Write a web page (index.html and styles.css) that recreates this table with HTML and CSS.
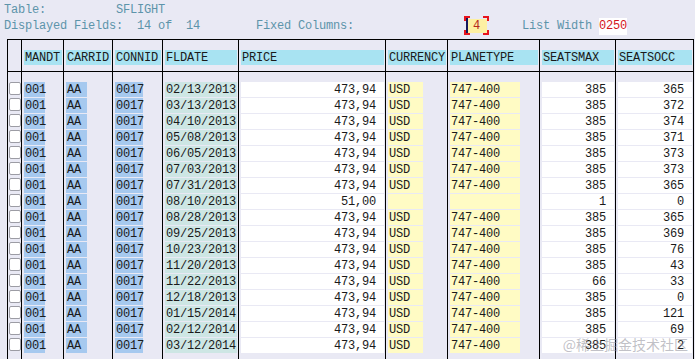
FILE: index.html
```html
<!doctype html>
<html lang="en">
<head>
	<meta charset="UTF-8">
	<title>SFLIGHT</title>
	<link rel="stylesheet" href="styles.css">
</head>
<body>
	<div class="info">
		<div class="line"><span class="lbl">Table:          SFLIGHT</span></div>
		<div class="line">
			<span class="lbl">Displayed Fields:  14 of  14        Fixed Columns:</span>
			<span class="field">4<svg class="brk" width="25" height="19" viewBox="0 0 25 19"><path d="M1 5V1H6M19 1H24V5M1 14V18H6M19 18H24V14" fill="none" stroke="#e8141c" stroke-width="2"/></svg></span>
			<span class="lbl list-w">List Width</span>
			<span class="width">0250</span>
		</div>
	</div>

	<div class="list">
		<div class="row head">
			<div class="cell"></div>
			<div class="cell"><span class="h">MANDT</span></div>
			<div class="cell"><span class="h">CARRID</span></div>
			<div class="cell"><span class="h">CONNID</span></div>
			<div class="cell"><span class="h">FLDATE</span></div>
			<div class="cell"><span class="h">PRICE</span></div>
			<div class="cell"><span class="h">CURRENCY</span></div>
			<div class="cell"><span class="h">PLANETYPE</span></div>
			<div class="cell"><span class="h">SEATSMAX</span></div>
			<div class="cell"><span class="h">SEATSOCC</span></div>
		</div>
		<div class="row gap">
			<div class="cell"></div><div class="cell"></div><div class="cell"></div><div class="cell"></div><div class="cell"></div>
			<div class="cell"></div><div class="cell"></div><div class="cell"></div><div class="cell"></div><div class="cell"></div>
		</div>

		<div class="row">
			<div class="cell"><span class="chk"></span></div>
			<div class="cell"><span class="v key w3">001</span></div><div class="cell"><span class="v key w3">AA</span></div><div class="cell"><span class="v key w4">0017</span></div>
			<div class="cell"><span class="v date">02/13/2013</span></div><div class="cell"><span class="v num">473,94</span></div>
			<div class="cell"><span class="v cur">USD</span></div><div class="cell"><span class="v plane">747-400</span></div>
			<div class="cell"><span class="v num">385</span></div><div class="cell"><span class="v num">365</span></div>
		</div>
		<div class="row">
			<div class="cell"><span class="chk"></span></div>
			<div class="cell"><span class="v key w3">001</span></div><div class="cell"><span class="v key w3">AA</span></div><div class="cell"><span class="v key w4">0017</span></div>
			<div class="cell"><span class="v date">03/13/2013</span></div><div class="cell"><span class="v num">473,94</span></div>
			<div class="cell"><span class="v cur">USD</span></div><div class="cell"><span class="v plane">747-400</span></div>
			<div class="cell"><span class="v num">385</span></div><div class="cell"><span class="v num">372</span></div>
		</div>
		<div class="row">
			<div class="cell"><span class="chk"></span></div>
			<div class="cell"><span class="v key w3">001</span></div><div class="cell"><span class="v key w3">AA</span></div><div class="cell"><span class="v key w4">0017</span></div>
			<div class="cell"><span class="v date">04/10/2013</span></div><div class="cell"><span class="v num">473,94</span></div>
			<div class="cell"><span class="v cur">USD</span></div><div class="cell"><span class="v plane">747-400</span></div>
			<div class="cell"><span class="v num">385</span></div><div class="cell"><span class="v num">374</span></div>
		</div>
		<div class="row">
			<div class="cell"><span class="chk"></span></div>
			<div class="cell"><span class="v key w3">001</span></div><div class="cell"><span class="v key w3">AA</span></div><div class="cell"><span class="v key w4">0017</span></div>
			<div class="cell"><span class="v date">05/08/2013</span></div><div class="cell"><span class="v num">473,94</span></div>
			<div class="cell"><span class="v cur">USD</span></div><div class="cell"><span class="v plane">747-400</span></div>
			<div class="cell"><span class="v num">385</span></div><div class="cell"><span class="v num">371</span></div>
		</div>
		<div class="row">
			<div class="cell"><span class="chk"></span></div>
			<div class="cell"><span class="v key w3">001</span></div><div class="cell"><span class="v key w3">AA</span></div><div class="cell"><span class="v key w4">0017</span></div>
			<div class="cell"><span class="v date">06/05/2013</span></div><div class="cell"><span class="v num">473,94</span></div>
			<div class="cell"><span class="v cur">USD</span></div><div class="cell"><span class="v plane">747-400</span></div>
			<div class="cell"><span class="v num">385</span></div><div class="cell"><span class="v num">373</span></div>
		</div>
		<div class="row">
			<div class="cell"><span class="chk"></span></div>
			<div class="cell"><span class="v key w3">001</span></div><div class="cell"><span class="v key w3">AA</span></div><div class="cell"><span class="v key w4">0017</span></div>
			<div class="cell"><span class="v date">07/03/2013</span></div><div class="cell"><span class="v num">473,94</span></div>
			<div class="cell"><span class="v cur">USD</span></div><div class="cell"><span class="v plane">747-400</span></div>
			<div class="cell"><span class="v num">385</span></div><div class="cell"><span class="v num">373</span></div>
		</div>
		<div class="row">
			<div class="cell"><span class="chk"></span></div>
			<div class="cell"><span class="v key w3">001</span></div><div class="cell"><span class="v key w3">AA</span></div><div class="cell"><span class="v key w4">0017</span></div>
			<div class="cell"><span class="v date">07/31/2013</span></div><div class="cell"><span class="v num">473,94</span></div>
			<div class="cell"><span class="v cur">USD</span></div><div class="cell"><span class="v plane">747-400</span></div>
			<div class="cell"><span class="v num">385</span></div><div class="cell"><span class="v num">365</span></div>
		</div>
		<div class="row">
			<div class="cell"><span class="chk"></span></div>
			<div class="cell"><span class="v key w3">001</span></div><div class="cell"><span class="v key w3">AA</span></div><div class="cell"><span class="v key w4">0017</span></div>
			<div class="cell"><span class="v date">08/10/2013</span></div><div class="cell"><span class="v num">51,00</span></div>
			<div class="cell"><span class="v cur"></span></div><div class="cell"><span class="v plane"></span></div>
			<div class="cell"><span class="v num">1</span></div><div class="cell"><span class="v num">0</span></div>
		</div>
		<div class="row">
			<div class="cell"><span class="chk"></span></div>
			<div class="cell"><span class="v key w3">001</span></div><div class="cell"><span class="v key w3">AA</span></div><div class="cell"><span class="v key w4">0017</span></div>
			<div class="cell"><span class="v date">08/28/2013</span></div><div class="cell"><span class="v num">473,94</span></div>
			<div class="cell"><span class="v cur">USD</span></div><div class="cell"><span class="v plane">747-400</span></div>
			<div class="cell"><span class="v num">385</span></div><div class="cell"><span class="v num">365</span></div>
		</div>
		<div class="row">
			<div class="cell"><span class="chk"></span></div>
			<div class="cell"><span class="v key w3">001</span></div><div class="cell"><span class="v key w3">AA</span></div><div class="cell"><span class="v key w4">0017</span></div>
			<div class="cell"><span class="v date">09/25/2013</span></div><div class="cell"><span class="v num">473,94</span></div>
			<div class="cell"><span class="v cur">USD</span></div><div class="cell"><span class="v plane">747-400</span></div>
			<div class="cell"><span class="v num">385</span></div><div class="cell"><span class="v num">369</span></div>
		</div>
		<div class="row">
			<div class="cell"><span class="chk"></span></div>
			<div class="cell"><span class="v key w3">001</span></div><div class="cell"><span class="v key w3">AA</span></div><div class="cell"><span class="v key w4">0017</span></div>
			<div class="cell"><span class="v date">10/23/2013</span></div><div class="cell"><span class="v num">473,94</span></div>
			<div class="cell"><span class="v cur">USD</span></div><div class="cell"><span class="v plane">747-400</span></div>
			<div class="cell"><span class="v num">385</span></div><div class="cell"><span class="v num">76</span></div>
		</div>
		<div class="row">
			<div class="cell"><span class="chk"></span></div>
			<div class="cell"><span class="v key w3">001</span></div><div class="cell"><span class="v key w3">AA</span></div><div class="cell"><span class="v key w4">0017</span></div>
			<div class="cell"><span class="v date">11/20/2013</span></div><div class="cell"><span class="v num">473,94</span></div>
			<div class="cell"><span class="v cur">USD</span></div><div class="cell"><span class="v plane">747-400</span></div>
			<div class="cell"><span class="v num">385</span></div><div class="cell"><span class="v num">43</span></div>
		</div>
		<div class="row">
			<div class="cell"><span class="chk"></span></div>
			<div class="cell"><span class="v key w3">001</span></div><div class="cell"><span class="v key w3">AA</span></div><div class="cell"><span class="v key w4">0017</span></div>
			<div class="cell"><span class="v date">11/22/2013</span></div><div class="cell"><span class="v num">473,94</span></div>
			<div class="cell"><span class="v cur">USD</span></div><div class="cell"><span class="v plane">747-400</span></div>
			<div class="cell"><span class="v num">66</span></div><div class="cell"><span class="v num">33</span></div>
		</div>
		<div class="row">
			<div class="cell"><span class="chk"></span></div>
			<div class="cell"><span class="v key w3">001</span></div><div class="cell"><span class="v key w3">AA</span></div><div class="cell"><span class="v key w4">0017</span></div>
			<div class="cell"><span class="v date">12/18/2013</span></div><div class="cell"><span class="v num">473,94</span></div>
			<div class="cell"><span class="v cur">USD</span></div><div class="cell"><span class="v plane">747-400</span></div>
			<div class="cell"><span class="v num">385</span></div><div class="cell"><span class="v num">0</span></div>
		</div>
		<div class="row">
			<div class="cell"><span class="chk"></span></div>
			<div class="cell"><span class="v key w3">001</span></div><div class="cell"><span class="v key w3">AA</span></div><div class="cell"><span class="v key w4">0017</span></div>
			<div class="cell"><span class="v date">01/15/2014</span></div><div class="cell"><span class="v num">473,94</span></div>
			<div class="cell"><span class="v cur">USD</span></div><div class="cell"><span class="v plane">747-400</span></div>
			<div class="cell"><span class="v num">385</span></div><div class="cell"><span class="v num">121</span></div>
		</div>
		<div class="row">
			<div class="cell"><span class="chk"></span></div>
			<div class="cell"><span class="v key w3">001</span></div><div class="cell"><span class="v key w3">AA</span></div><div class="cell"><span class="v key w4">0017</span></div>
			<div class="cell"><span class="v date">02/12/2014</span></div><div class="cell"><span class="v num">473,94</span></div>
			<div class="cell"><span class="v cur">USD</span></div><div class="cell"><span class="v plane">747-400</span></div>
			<div class="cell"><span class="v num">385</span></div><div class="cell"><span class="v num">69</span></div>
		</div>
		<div class="row">
			<div class="cell"><span class="chk"></span></div>
			<div class="cell"><span class="v key w3">001</span></div><div class="cell"><span class="v key w3">AA</span></div><div class="cell"><span class="v key w4">0017</span></div>
			<div class="cell"><span class="v date">03/12/2014</span></div><div class="cell"><span class="v num">473,94</span></div>
			<div class="cell"><span class="v cur">USD</span></div><div class="cell"><span class="v plane">747-400</span></div>
			<div class="cell"><span class="v num">385</span></div><div class="cell"><span class="v num">2</span></div>
		</div>
		<div class="row gap">
			<div class="cell"></div><div class="cell"></div><div class="cell"></div><div class="cell"></div><div class="cell"></div>
			<div class="cell"></div><div class="cell"></div><div class="cell"></div><div class="cell"></div><div class="cell"></div>
		</div>
	</div>

	<div class="mark">@稀土掘金技术社区</div>
</body>
</html>
```

FILE: styles.css
```css
html, body {
	margin: 0;
	padding: 0;
	height: 359px;
	overflow: hidden;
}
body {
	position: relative;
	background: #e9e9f4;
	color: #1a1a1a;
	font-family: "Liberation Mono", "Courier New", monospace;
	font-size: 12px;
	letter-spacing: -0.2px;
}

/* top info lines */
.info {
	height: 39px;
	padding: 2px 0 0 4px;
	box-sizing: border-box;
}
.line {
	display: flex;
	align-items: center;
	height: 16px;
	white-space: pre;
}
.lbl {
	color: #5d94aa;
}
.field {
	position: relative;
	display: inline-block;
	width: 21px;
	height: 14px;
	line-height: 14px;
	margin-left: 112px;
	padding-left: 7px;
	box-sizing: border-box;
	background: #fdf0a2;
	color: #b5281c;
}
.field::before {
	content: "";
	position: absolute;
	left: 0;
	top: -1px;
	width: 2px;
	height: 15px;
	background: #17175a;
}
.brk {
	position: absolute;
	left: -2px;
	top: -3px;
}
.list-w {
	margin-left: 35px;
}
.width {
	display: inline-block;
	height: 17px;
	line-height: 17px;
	margin-left: 7px;
	background: #fff;
	color: #d4141c;
}

/* list grid */
.row {
	display: grid;
	grid-template-columns: 14px 42px 49px 50px 76px 147px 62px 92px 76px 78px;
	height: 16px;
	margin-left: 7px;
	width: 686px;
	border-left: 1px solid #000;
}
.cell {
	border-right: 1px solid #000;
	padding: 0 1px 0 2px;
	overflow: hidden;
}
.head {
	height: 31px;
	border-top: 1px solid #000;
	border-bottom: 1px solid #000;
}
.gap {
	height: 10px;
}
.h {
	display: block;
	margin-top: 10px;
	height: 15px;
	line-height: 16px;
	background: #a8e3f2;
	padding-left: 1px;
}
.v {
	display: block;
	height: 15px;
	line-height: 16px;
	padding-left: 1px;
	white-space: pre;
}
.key {
	background: #a6c9ef;
}
.w3 {
	width: 20px;
}
.w4 {
	width: 27px;
}
.date {
	background: #cde6e4;
}
.num {
	background: #fff;
	text-align: right;
	padding-right: 8px;
}
.cur {
	width: 34px;
	background: #fffbc4;
}
.plane {
	width: 69px;
	background: #fffbc4;
}
.chk {
	display: block;
	width: 10px;
	height: 11px;
	margin-left: -1px;
	background: #fff;
	border: 1px solid #9c9ca4;
	border-radius: 2px;
}

.mark {
	position: absolute;
	right: 7px;
	bottom: 5px;
	font-family: "Noto Sans CJK SC", sans-serif;
	font-size: 14px;
	letter-spacing: 0;
	color: rgba(140, 140, 150, 0.55);
}
```
